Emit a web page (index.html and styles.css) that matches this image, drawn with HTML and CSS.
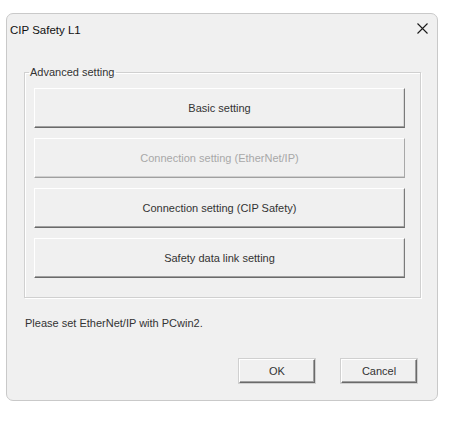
FILE: index.html
```html
<!DOCTYPE html>
<html lang="en">
<head>
  <meta charset="UTF-8">
  <title>CIP Safety L1</title>
  <link rel="stylesheet" href="styles.css">
</head>
<body>
<div class="window">
  <div class="titlebar">
    <span class="title">CIP Safety L1</span>
    <button class="close" aria-label="Close">
      <svg width="11" height="11" viewBox="0 0 11 11"><path d="M0.5 0.5 L10.5 10.5 M10.5 0.5 L0.5 10.5" stroke="#1a1a1a" stroke-width="1.1" fill="none"/></svg>
    </button>
  </div>
  <fieldset class="group">
    <legend>Advanced setting</legend>
    <button class="big">Basic setting</button>
    <button class="big" disabled>Connection setting (EtherNet/IP)</button>
    <button class="big">Connection setting (CIP Safety)</button>
    <button class="big">Safety data link setting</button>
  </fieldset>
  <p class="note">Please set EtherNet/IP with PCwin2.</p>
  <div class="actions">
    <button class="small">OK</button>
    <button class="small">Cancel</button>
  </div>
</div>
</body>
</html>
```

FILE: styles.css
```css
body { margin: 0; background: #ffffff; font-family: "Liberation Sans", Arial, sans-serif; font-size: 11px; color: #333; }
.window {
  margin: 13px 0 0 6px; width: 432px; height: 388px; box-sizing: border-box;
  background: #f0f0f0; border: 1px solid #c9c9c9; border-radius: 7px;
  display: flex; flex-direction: column;
}
.titlebar { height: 29px; display: flex; align-items: center; justify-content: space-between; padding: 0 8px 0 3px; }
.title { font-size: 11.5px; color: #111; margin-top: 2px; }
.close { border: none; background: none; padding: 0; width: 12px; height: 12px; display: flex; margin-top: 1px; }

.group {
  margin: 23px 17px 0 17px; padding: 9px 15px 19px 9px;
  border: 1px solid #d0d0d0; box-shadow: inset 1px 1px 0 #fff, 1px 1px 0 #fff;
  display: flex; flex-direction: column; gap: 10px;
}
.group legend { padding: 0 2px 0 1px; margin-left: -5px; color: #333; line-height: 13px; }

button { font-family: inherit; font-size: 11px; font-weight: 400; color: #333; background: #f0f0f0; cursor: default; }
.big {
  height: 40px; width: 371px;
  border: 1px solid; border-color: #ffffff #7a7a7a #6a6a6a #ffffff;
  box-shadow: inset 0 -1px 0 #a0a0a0, inset -1px 0 0 #d8d8d8;
}
.big:disabled { color: #a8a8a8; border-color: #ffffff #a8a8a8 #a0a0a0 #ffffff; box-shadow: inset 0 -1px 0 #cfcfcf; }

.note { margin: 19px 0 0 18px; line-height: 13px; }
.actions { display: flex; justify-content: flex-end; gap: 26px; margin: 29px 20px 0 0; }
.small {
  width: 76px; height: 24px;
  border: 1px solid; border-color: #ffffff #6a6a6a #6a6a6a #ffffff;
  box-shadow: inset -1px -1px 0 #a0a0a0;
  outline: 1px solid #d0d0d0;
}
```
